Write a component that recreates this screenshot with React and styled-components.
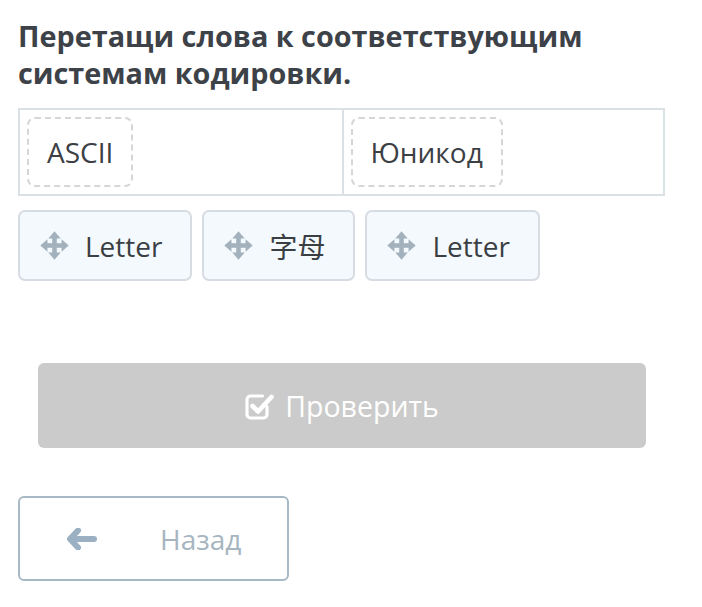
import React from "react";
import styled, { createGlobalStyle } from "styled-components";

const Global = createGlobalStyle`
  html, body { margin: 0; padding: 0; background: #fff; }
  body { font-family: "Open Sans", "Noto Sans CJK SC", sans-serif; }
`;

const Page = styled.div`
  width: 647px;
  padding: 17px 0 0 18px;
  display: flex;
  flex-direction: column;
`;

const Title = styled.h1`
  margin: 0;
  font-size: 28.8px;
  line-height: 37px;
  font-weight: 700;
  color: #3d4248;
  width: 640px;
`;

const Table = styled.div`
  margin-top: 17px;
  display: grid;
  grid-template-columns: 1fr 1fr;
  border: 2px solid #d9e1e4;
`;

const Cell = styled.div`
  padding: 7px;
  height: 70px;
  display: flex;
  border-left: ${(p) => (p.$first ? "none" : "2px solid #d9e1e4")};
`;

const Slot = styled.div`
  border: 2px dashed #d6d6d6;
  border-radius: 8px;
  padding: 0 18px;
  display: flex;
  align-items: center;
  font-size: 28px;
  color: #3c4045;
`;

const Pool = styled.div`
  margin-top: 14px;
  display: flex;
  gap: 10px;
`;

const Chip = styled.div`
  height: 67px;
  box-sizing: content-box;
  border: 2px solid #d6dce1;
  border-radius: 7px;
  background: #f4f9fd;
  display: flex;
  align-items: center;
  gap: 16px;
  padding: 0 28px 0 20px;
  font-size: 28px;
  color: #3a3f44;
  svg { flex: none; }
`;

const CheckButton = styled.button`
  margin: 82px 19px 0 20px;
  height: 85px;
  border: none;
  border-radius: 6px;
  background: #cbcbcb;
  color: #fff;
  font-family: inherit;
  font-size: 28.5px;
  display: flex;
  align-items: center;
  justify-content: center;
  gap: 11px;
  padding: 0;
  svg { flex: none; }
`;

const BackButton = styled.button`
  margin-top: 48px;
  width: 271px;
  height: 85px;
  border: 2px solid #a7b9c4;
  border-radius: 6px;
  background: #fff;
  color: #a6b5bf;
  font-family: inherit;
  font-size: 28px;
  display: flex;
  align-items: center;
  padding: 0 0 0 47px;
  svg { flex: none; }
`;

const BackLabel = styled.span`
  margin-left: 63px;
`;

const MoveIcon = () => (
  <svg width="29" height="29" viewBox="0 0 28 28">
    <g fill="#a2b1bc">
      <rect x="11.8" y="5" width="4.4" height="18" />
      <rect x="5" y="11.8" width="18" height="4.4" />
      <path d="M14 0.3L20 7.2H8Z" />
      <path d="M14 27.7L20 20.8H8Z" />
      <path d="M0.3 14L7.2 8V20Z" />
      <path d="M27.7 14L20.8 8V20Z" />
    </g>
  </svg>
);

const ArrowIcon = () => (
  <svg width="30" height="22" viewBox="0 0 30 22">
    <path
      d="M11 2.5L3 11l8 8.5M4 11h23"
      stroke="#9bb1c3"
      strokeWidth="6"
      fill="none"
      strokeLinecap="round"
      strokeLinejoin="round"
    />
  </svg>
);

const CheckIcon = () => (
  <svg width="29" height="28" viewBox="0 0 29 28" fill="none">
    <path
      d="M22 14.5V22.5a3.5 3.5 0 0 1-3.5 3.5H5.5A3.5 3.5 0 0 1 2 22.5V7.5A3.5 3.5 0 0 1 5.5 4h12"
      stroke="#fff"
      strokeWidth="3.2"
      strokeLinecap="round"
    />
    <path
      d="M7.5 14l5.5 5.5L26.5 5"
      stroke="#fff"
      strokeWidth="4.6"
      strokeLinecap="round"
      strokeLinejoin="round"
    />
  </svg>
);

export default function App() {
  return (
    <>
      <Global />
      <Page>
        <Title>Перетащи слова к соответствующим системам кодировки.</Title>
        <Table>
          <Cell $first>
            <Slot>ASCII</Slot>
          </Cell>
          <Cell>
            <Slot>Юникод</Slot>
          </Cell>
        </Table>
        <Pool>
          <Chip>
            <MoveIcon />
            Letter
          </Chip>
          <Chip>
            <MoveIcon />
            字母
          </Chip>
          <Chip>
            <MoveIcon />
            Letter
          </Chip>
        </Pool>
        <CheckButton>
          <CheckIcon />
          Проверить
        </CheckButton>
        <BackButton>
          <ArrowIcon />
          <BackLabel>Назад</BackLabel>
        </BackButton>
      </Page>
    </>
  );
}
